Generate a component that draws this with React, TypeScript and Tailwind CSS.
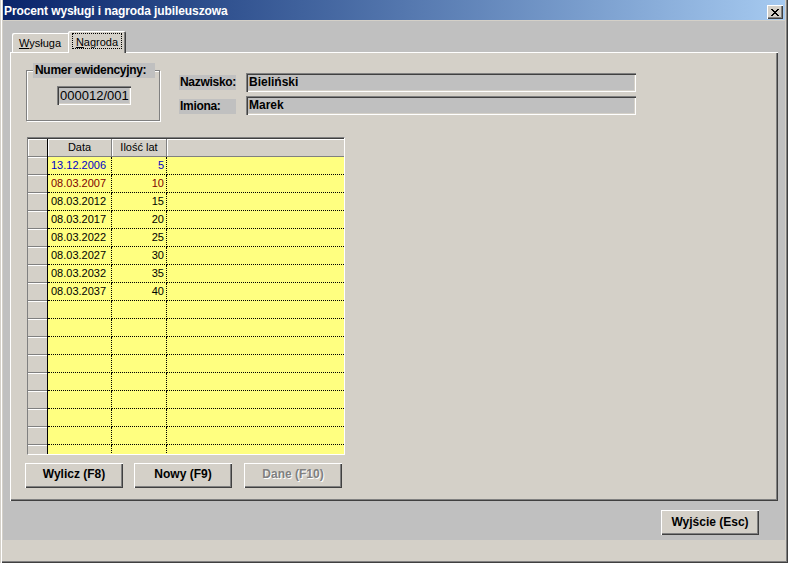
import React from 'react';

const raised = 'shadow-[inset_1px_1px_0_#ffffff,inset_-1px_-1px_0_#404040,inset_-2px_-2px_0_#808080]';
const sunken = 'shadow-[inset_1px_1px_0_#808080,inset_2px_2px_0_#404040,inset_-1px_-1px_0_#ffffff,inset_-2px_-2px_0_#d4d0c8]';

type Row = { date: string; years: string; color?: string };

const rows: Row[] = [
  { date: '13.12.2006', years: '5', color: 'text-[#0000c8]' },
  { date: '08.03.2007', years: '10', color: 'text-[#800000]' },
  { date: '08.03.2012', years: '15' },
  { date: '08.03.2017', years: '20' },
  { date: '08.03.2022', years: '25' },
  { date: '08.03.2027', years: '30' },
  { date: '08.03.2032', years: '35' },
  { date: '08.03.2037', years: '40' },
];

const emptyRows: Row[] = Array.from({ length: 10 }, () => ({ date: '', years: '' }));

function Button({ label, disabled, className = '' }: { label: string; disabled?: boolean; className?: string }) {
  return (
    <div
      className={`w-[98px] h-[25px] bg-[#d4d0c8] text-center text-[12px] font-bold ${raised} ${
        disabled ? 'text-[#808080] [text-shadow:1px_1px_0_#ffffff]' : 'text-black'
      } ${className}`}
    >
      {label}
    </div>
  );
}

function Grid() {
  return (
    <div className="ml-[17px] mt-[16px] w-[318px] h-[318px] border-l border-t border-l-[#808080] border-t-[#808080] border-r border-b border-r-white border-b-white">
      <div className="h-full border-t border-t-[#404040] overflow-hidden text-[11px]">
        {/* header */}
        <div className="flex h-[18px]">
          <div className="w-[19px] bg-[#d4d0c8] border-b border-[#808080] shadow-[inset_1px_1px_0_#ffffff]" />
          <div className="w-px bg-black" />
          <div className="w-[64px] bg-[#d4d0c8] border-b border-r border-[#808080] shadow-[inset_1px_1px_0_#ffffff] text-center leading-[17px]">
            Data
          </div>
          <div className="w-[55px] bg-[#d4d0c8] border-b border-r border-[#808080] shadow-[inset_1px_1px_0_#ffffff] text-center leading-[17px]">
            Ilość lat
          </div>
          <div className="flex-1 bg-[#d4d0c8] border-b border-[#808080] shadow-[inset_1px_1px_0_#ffffff]" />
        </div>
        {[...rows, ...emptyRows].map((r, i) => (
          <div key={i} className="flex h-[18px]">
            <div className="w-[19px] bg-[#d4d0c8] border-b border-[#808080] shadow-[inset_0_1px_0_#ffffff]" />
            <div className="w-px bg-black" />
            <div className={`w-[64px] bg-[#ffff80] border-r border-b border-dotted border-black pl-[3px] leading-[17px] ${r.color ?? 'text-black'}`}>
              {r.date}
            </div>
            <div className={`w-[55px] bg-[#ffff80] border-r border-b border-dotted border-black pr-[2px] text-right leading-[17px] ${r.color ?? 'text-black'}`}>
              {r.years}
            </div>
            <div className="flex-1 bg-[#ffff80] border-b border-dotted border-black" />
          </div>
        ))}
      </div>
    </div>
  );
}

export default function App() {
  return (
    <div className="w-[788px] h-[563px] bg-[#d4d0c8] pl-[3px] pr-[3px] pb-[23px] flex flex-col font-['Liberation_Sans',Arial,sans-serif] text-black shadow-[inset_1px_0_0_#d4d0c8,inset_2px_0_0_#ffffff,inset_-1px_-1px_0_#404040,inset_-2px_-2px_0_#808080] overflow-hidden select-none">
      {/* title bar */}
      <div className="h-[20px] flex justify-between bg-gradient-to-r from-[#0a246a] to-[#a6caf0]">
        <div className="pl-[1px] pt-[3px] text-[12px] leading-[17px] font-bold text-white tracking-[-0.1px] whitespace-nowrap">
          Procent wysługi i nagroda jubileuszowa
        </div>
        <div className={`mt-[5px] mr-[2px] w-[16px] h-[14px] bg-[#d4d0c8] flex items-center justify-center ${raised}`}>
          <svg width="8" height="7" viewBox="0 0 8 7" shapeRendering="crispEdges">
            <path d="M0 0h2v1h1v1h2V1h1V0h2v1H7v1H6v1H5v1h1v1h1v1h1v1H6V6H5V5H3v1H2v1H0V6h1V5h1V4h1V3H2V2H1V1H0z" fill="#000" />
          </svg>
        </div>
      </div>
      <div className="h-px" />

      {/* body */}
      <div className="flex-1 bg-[#c0c0c0] pl-[7px] pr-[7px] flex flex-col">
        {/* tabs */}
        <div className="pt-[10px] pl-[2px] flex items-end h-[31px]">
          <div className="w-[56px] h-[19px] bg-[#d4d0c8] rounded-tl-[2px] shadow-[inset_1px_1px_0_#ffffff] pt-[4px] text-center text-[11px] leading-[13px]">
            <span className="underline">W</span>ysługa
          </div>
          <div className="relative z-10 -mb-px w-[58px] h-[22px] bg-[#d4d0c8] rounded-t-[2px] shadow-[inset_1px_1px_0_#ffffff,inset_-1px_0_0_#404040,inset_-2px_0_0_#808080] pt-[2px] flex justify-center">
            <span className="h-[16px] border border-dotted border-black px-[3px] pt-[2px] text-[11px] leading-[12px]">
              <span className="underline">N</span>agroda
            </span>
          </div>
        </div>

        {/* panel */}
        <div className="h-[449px] bg-[#d4d0c8] shadow-[inset_1px_1px_0_#ffffff,inset_-1px_-1px_0_#404040,inset_-2px_-2px_0_#808080] flex flex-col">
          <div className="flex items-start">
            {/* group box */}
            <div className="relative ml-[16px] mt-[18px] w-[134px] h-[51px] border border-[#808080] shadow-[inset_1px_1px_0_#ffffff,1px_1px_0_#ffffff] pl-[30px] pt-[15px]">
              <div className="absolute left-[6px] top-[-8px] w-[122px] h-[15px] bg-[#c0c0c0] pl-[2px] text-[12px] leading-[14px] font-bold tracking-[-0.3px] whitespace-nowrap">
                Numer ewidencyjny:
              </div>
              <div className={`w-[74px] h-[19px] bg-[#c0c0c0] pl-[3px] text-[13px] leading-[19px] ${sunken}`}>000012/001</div>
            </div>

            {/* names */}
            <div className="ml-[19px] mt-[21px] flex flex-col gap-[4px]">
              <div className="flex items-start">
                <div className="mt-[2px] w-[57px] h-[15px] bg-[#c0c0c0] pl-[1px] text-[12px] leading-[15px] font-bold tracking-[-0.3px]">Nazwisko:</div>
                <div className={`ml-[10px] w-[390px] h-[19px] bg-[#c0c0c0] pl-[3px] text-[12px] leading-[19px] font-bold ${sunken}`}>Bieliński</div>
              </div>
              <div className="flex items-start">
                <div className="mt-[3px] w-[57px] h-[15px] bg-[#c0c0c0] pl-[1px] text-[12px] leading-[15px] font-bold tracking-[-0.3px]">Imiona:</div>
                <div className={`ml-[10px] w-[390px] h-[19px] bg-[#c0c0c0] pl-[3px] text-[12px] leading-[19px] font-bold ${sunken}`}>Marek</div>
              </div>
            </div>
          </div>

          <Grid />

          <div className="ml-[15px] mt-[8px] flex gap-[11px] leading-[23px]">
            <Button label="Wylicz (F8)" />
            <Button label="Nowy (F9)" />
            <Button label="Dane (F10)" disabled className="ml-px" />
          </div>
        </div>

        {/* exit */}
        <div className="mt-[9px] flex justify-end pr-[19px]">
          <Button label="Wyjście (Esc)" className="leading-[25px]" />
        </div>
      </div>
    </div>
  );
}
